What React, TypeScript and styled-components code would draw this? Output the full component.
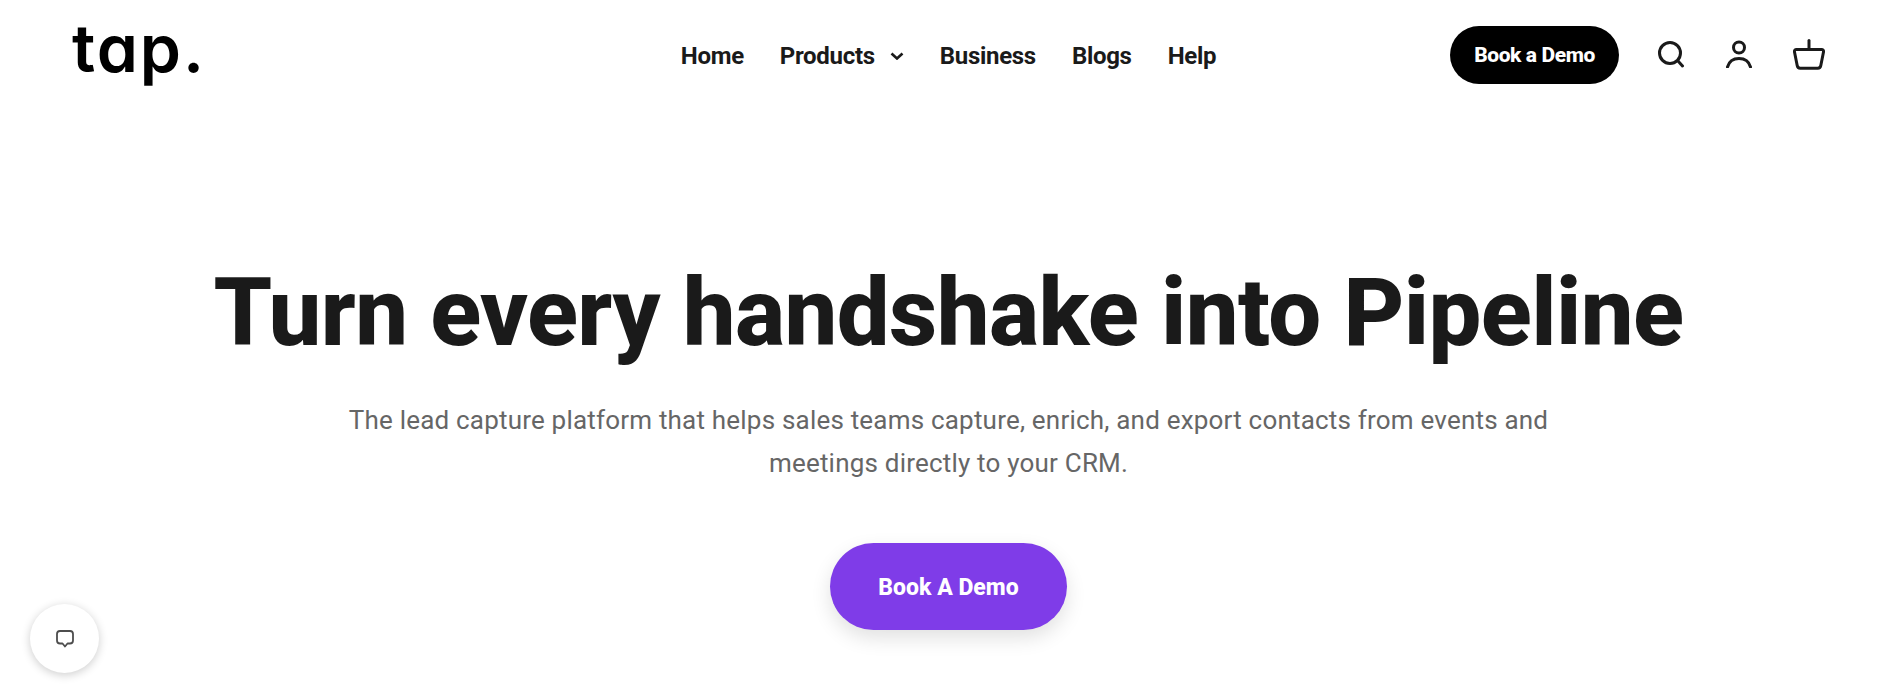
import styled, { createGlobalStyle } from "styled-components";

const GlobalStyle = createGlobalStyle`
    html, body {
        margin: 0;
        padding: 0;
        background: #fff;
    }
    body {
        height: 685px;
        overflow: hidden;
        font-family: Roboto, "Liberation Sans", sans-serif;
    }
`;

const navItems = ["Home", "Products", "Business", "Blogs", "Help"];

const App = () => {
    return (
        <>
            <GlobalStyle />
            <Header>
                <Logo>tap.</Logo>
                <Nav>
                    {navItems.map((item) => (
                        <NavLink key={item}>
                            {item}
                            {item === "Products" && (
                                <svg width="14" height="8" viewBox="0 0 14 8" fill="none">
                                    <path d="M1.5 1.5L7 6.5L12.5 1.5" stroke="#1a1a1a" strokeWidth="2.6" />
                                </svg>
                            )}
                        </NavLink>
                    ))}
                </Nav>
                <Actions>
                    <DemoButton>Book a Demo</DemoButton>
                    <IconRow>
                        <IconButton>
                            <svg width="28" height="28" viewBox="0 0 28 28" fill="none" stroke="#1a1a1a" strokeWidth="3" strokeLinecap="round">
                                <circle cx="13" cy="13" r="10.5" />
                                <path d="M21 21L25.5 26" />
                            </svg>
                        </IconButton>
                        <IconButton>
                            <svg width="28" height="28" viewBox="0 0 28 28" fill="none" stroke="#1a1a1a" strokeWidth="3" strokeLinecap="round">
                                <circle cx="14" cy="7.5" r="5.5" />
                                <path d="M2.5 27C4 21.5 8.5 18.5 14 18.5C19.5 18.5 24 21.5 25.5 27" />
                            </svg>
                        </IconButton>
                        <IconButton>
                            <svg width="32" height="31" viewBox="0 0 32 31" fill="none" stroke="#1a1a1a" strokeWidth="3" strokeLinecap="round" strokeLinejoin="round">
                                <path d="M16 1.5V10" />
                                <path d="M3.5 10.5H28.5C30 10.5 30.8 11.5 30.5 13L27.8 26.5C27.5 28.2 26.5 29.2 24.8 29.2H7.2C5.5 29.2 4.5 28.2 4.2 26.5L1.5 13C1.2 11.5 2 10.5 3.5 10.5Z" />
                            </svg>
                        </IconButton>
                    </IconRow>
                </Actions>
            </Header>
            <Hero>
                <Title>Turn every handshake into Pipeline</Title>
                <Subtitle>
                    The lead capture platform that helps sales teams capture, enrich, and export contacts from events and
                    meetings directly to your CRM.
                </Subtitle>
                <PrimaryButton>Book A Demo</PrimaryButton>
            </Hero>
            <ChatBubble>
                <svg width="18" height="18" viewBox="0 0 18 18" fill="none">
                    <path
                        d="M4 1H14C15.7 1 17 2.3 17 4V10.5C17 12.2 15.7 13.5 14 13.5H11.5L9 16.5L6.5 13.5H4C2.3 13.5 1 12.2 1 10.5V4C1 2.3 2.3 1 4 1Z"
                        stroke="#4d4d4d"
                        strokeWidth="1.8"
                        strokeLinejoin="round"
                    />
                </svg>
            </ChatBubble>
        </>
    );
};

const Header = styled.header`
    display: grid;
    grid-template-columns: 1fr auto 1fr;
    align-items: center;
    height: 110px;
    padding: 0 72px;
    box-sizing: border-box;
`;

const Logo = styled.div`
    font-family: Inter, sans-serif;
    font-feature-settings: "cv11" 1;
    font-size: 66px;
    font-weight: 600;
    line-height: 1;
    letter-spacing: 2px;
    color: #000;
    margin-top: -14px;
`;

const Nav = styled.nav`
    display: flex;
    align-items: center;
    gap: 36px;
    padding-top: 1px;
`;

const NavLink = styled.a`
    display: flex;
    align-items: center;
    gap: 15px;
    font-size: 24px;
    font-weight: 700;
    letter-spacing: -0.3px;
    color: #1a1a1a;
`;

const Actions = styled.div`
    display: flex;
    align-items: center;
    justify-content: flex-end;
    gap: 38px;
`;

const DemoButton = styled.button`
    width: 169px;
    height: 58px;
    margin-left: -1px;
    border: 0;
    border-radius: 29px;
    background: #000;
    color: #fff;
    font-family: inherit;
    font-size: 21px;
    font-weight: 800;
    letter-spacing: -0.4px;
`;

const IconRow = styled.div`
    display: flex;
    align-items: center;
    gap: 40px;
    margin-top: -2px;
`;

const IconButton = styled.span`
    display: flex;
    align-items: center;
    justify-content: center;
`;

const Hero = styled.main`
    display: flex;
    flex-direction: column;
    align-items: center;
    padding-top: 139px;
`;

const Title = styled.h1`
    margin: 0;
    font-size: 94px;
    font-weight: 800;
    line-height: 128px;
    letter-spacing: -0.6px;
    color: #1a1a1a;
    white-space: nowrap;
`;

const Subtitle = styled.p`
    width: 1240px;
    margin: 22px 0 0;
    font-size: 26px;
    line-height: 43px;
    text-align: center;
    letter-spacing: 0.2px;
    color: #666;
`;

const PrimaryButton = styled.button`
    width: 237px;
    height: 87px;
    margin-top: 58px;
    padding-top: 2px;
    border: 0;
    border-radius: 44px;
    background: #7f3ce8;
    color: #fff;
    font-family: inherit;
    font-size: 23px;
    font-weight: 800;
    box-shadow: 0 8px 20px rgba(0, 0, 0, 0.12);
`;

const ChatBubble = styled.div`
    position: fixed;
    left: 30px;
    top: 604px;
    width: 69px;
    height: 69px;
    display: flex;
    align-items: center;
    justify-content: center;
    border-radius: 50%;
    background: #fff;
    box-shadow: 0 2px 10px rgba(0, 0, 0, 0.2);
`;

export default App;
